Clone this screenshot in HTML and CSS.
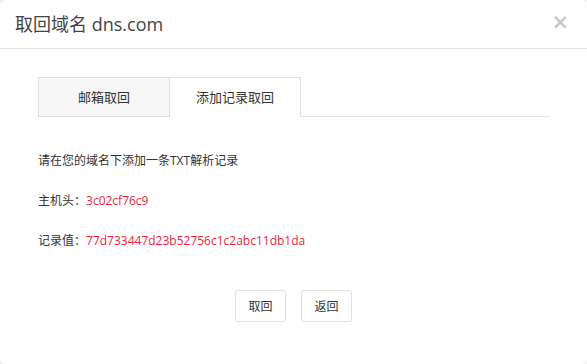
FILE: index.html
```html
<!DOCTYPE html>
<html lang="zh-CN">
<head>
  <meta charset="UTF-8" />
  <title>取回域名</title>
  <link rel="stylesheet" href="styles.css">
</head>
<body>
  <div class="modal">
    <div class="modal-header">
      <h3>取回域名 dns.com</h3>
      <span class="close">&times;</span>
    </div>

    <div class="modal-body">
      <ul class="tabs">
        <li class="tab">邮箱取回</li>
        <li class="tab active">添加记录取回</li>
      </ul>

      <div class="tab-content">
        <p>请在您的域名下添加一条TXT解析记录</p>
        <p>主机头：<span class="red">3c02cf76c9</span></p>
        <p>记录值：<span class="red">77d733447d23b52756c1c2abc11db1da</span></p>
      </div>
    </div>

    <div class="modal-footer">
      <button>取回</button>
      <button>返回</button>
    </div>
  </div>
</body>
</html>
```

FILE: styles.css
```css
html, body {
  margin: 0;
  padding: 0;
  background-color: #f2f2f2;
}
body {
  font-family: 'Open Sans', 'Noto Sans CJK SC', sans-serif;
  color: #333;
  font-size: 12px;
}
.modal {
  width: 587px;
  height: 364px;
  box-sizing: border-box;
  background-color: #fff;
  border-radius: 6px;
  overflow: hidden;
}
.modal-header {
  height: 48px;
  border-bottom: 1px solid #e5e5e5;
  display: flex;
  align-items: center;
  justify-content: space-between;
  padding: 0 15px;
}
.modal-header h3 {
  margin: 0;
  font-size: 18px;
  font-weight: normal;
  color: #444;
  position: relative;
  top: -1px;
}
.close {
  font-family: 'DejaVu Sans', sans-serif;
  font-size: 21px;
  font-weight: bold;
  color: #c8c8c8;
  line-height: 1;
  margin-right: 3px;
  position: relative;
  top: -2px;
}
.modal-body {
  padding: 28px 37px 0 38px;
}
.tabs {
  list-style: none;
  margin: 0;
  padding: 0;
  display: flex;
  border-bottom: 1px solid #e5e5e5;
}
.tab {
  width: 130px;
  height: 38px;
  line-height: 38px;
  text-align: center;
  font-size: 13px;
  background-color: #f7f7f7;
  border: 1px solid #e0e0e0;
  border-bottom: 1px solid #e0e0e0;
  margin-bottom: -1px;
}
.tab + .tab {
  border-left: none;
}
.tab.active {
  background-color: #fff;
  border-bottom-color: #fff;
}
.tab-content {
  padding-top: 35px;
}
.tab-content p {
  margin: 0 0 23px 0;
  line-height: 17px;
}
.red {
  color: #ea1f3c;
}
.modal-footer {
  display: flex;
  justify-content: center;
  gap: 15px;
  padding-top: 18px;
}
button {
  font-family: inherit;
  font-size: 12px;
  color: #333;
  background-color: #fff;
  border: 1px solid #e0e0e0;
  border-radius: 3px;
  width: 51px;
  height: 32px;
  padding: 0;
  cursor: pointer;
}
```
